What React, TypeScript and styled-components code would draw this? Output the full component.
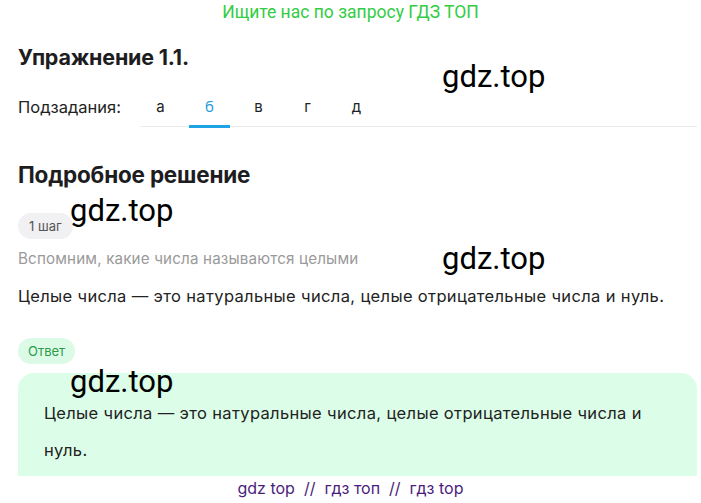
import styled, { createGlobalStyle } from 'styled-components';

const GlobalStyle = createGlobalStyle`
  html, body {
    margin: 0;
    padding: 0;
    background: #ffffff;
  }
  body {
    font-family: Inter, 'Noto Sans', sans-serif;
    color: #1d1d1f;
  }
`;

const Page = styled.div`
  position: relative;
  width: 701px;
  height: 503px;
  overflow: hidden;
  background: #fff;
`;

const Banner = styled.div`
  height: 23px;
  display: flex;
  align-items: center;
  justify-content: center;
  font-family: Roboto, 'Liberation Sans', sans-serif;
  font-size: 17.5px;
  color: #33cc44;
`;

const Content = styled.div`
  padding: 0 4px 0 18px;
  display: flex;
  flex-direction: column;
`;

const Title = styled.h1`
  margin: 21px 0 0;
  font-size: 21.5px;
  line-height: 26px;
  font-weight: 700;
  letter-spacing: -0.2px;
`;

const SubtaskRow = styled.div`
  margin-top: 22px;
  display: flex;
  align-items: stretch;
  height: 35px;
`;

const SubtaskLabel = styled.span`
  width: 122px;
  font-size: 16.5px;
  line-height: 30px;
  color: #222;
`;

const Tabs = styled.div`
  flex: 1;
  display: flex;
  gap: 8px;
  border-bottom: 1.5px solid #ebebeb;
`;

const Tab = styled.span<{ $active?: boolean }>`
  width: 41px;
  text-align: center;
  font-size: 15px;
  line-height: 30px;
  color: ${(p) => (p.$active ? '#2a9fd8' : '#222')};
  border-bottom: 3px solid ${(p) => (p.$active ? '#1fa3e6' : 'transparent')};
  margin-bottom: -2px;
`;

const SectionTitle = styled.h2`
  margin: 35px 0 0;
  font-size: 22.5px;
  line-height: 26px;
  font-weight: 700;
  letter-spacing: -0.2px;
`;

const Pill = styled.span<{ $tone: 'gray' | 'green' }>`
  align-self: flex-start;
  height: 26px;
  padding: 0 ${(p) => (p.$tone === 'green' ? '10px' : '11px')};
  border-radius: 13px;
  display: flex;
  align-items: center;
  font-size: 13px;
  background: ${(p) => (p.$tone === 'green' ? '#dcfbe6' : '#f1f1f3')};
  color: ${(p) => (p.$tone === 'green' ? '#2b9a4c' : '#555')};
`;

const StepPill = styled(Pill)`
  margin-top: 25px;
`;

const AnswerPill = styled(Pill)`
  margin-top: 31px;
`;

const Hint = styled.p`
  margin: 10px 0 0;
  font-size: 15.2px;
  letter-spacing: 0.15px;
  line-height: 20px;
  color: #9a9a9a;
`;

const Body = styled.p`
  margin: 16px 0 0;
  font-size: 16.5px;
  letter-spacing: 0.35px;
  line-height: 22px;
  color: #222;
`;

const AnswerBox = styled.div`
  margin-top: 9px;
  height: 140px;
  border-radius: 16px;
  background: #dcfde8;
  padding: 22px 40px 0 26px;
  font-size: 16.5px;
  letter-spacing: 0.35px;
  line-height: 37px;
  color: #222;
`;

const Footer = styled.div`
  position: absolute;
  left: 0;
  right: 0;
  bottom: 0;
  height: 27px;
  padding-bottom: 3px;
  box-sizing: border-box;
  background: #fff;
  display: flex;
  align-items: center;
  justify-content: center;
  font-size: 16px;
  color: #4a1d7c;
  white-space: pre;
`;

const Watermark = styled.span<{ $x: number; $y: number }>`
  position: absolute;
  left: ${(p) => p.$x}px;
  top: ${(p) => p.$y}px;
  font-family: Roboto, 'Liberation Sans', sans-serif;
  font-size: 31px;
  line-height: 1;
  color: #000;
  pointer-events: none;
`;

const subtasks = ['а', 'б', 'в', 'г', 'д'];

export default function App() {
  return (
    <Page>
      <GlobalStyle />
      <Banner>Ищите нас по запросу ГДЗ ТОП</Banner>
      <Content>
        <Title>Упражнение 1.1.</Title>
        <SubtaskRow>
          <SubtaskLabel>Подзадания:</SubtaskLabel>
          <Tabs>
            {subtasks.map((s) => (
              <Tab key={s} $active={s === 'б'}>
                {s}
              </Tab>
            ))}
          </Tabs>
        </SubtaskRow>
        <SectionTitle>Подробное решение</SectionTitle>
        <StepPill $tone="gray">1 шаг</StepPill>
        <Hint>Вспомним, какие числа называются целыми</Hint>
        <Body>Целые числа — это натуральные числа, целые отрицательные числа и нуль.</Body>
        <AnswerPill $tone="green">Ответ</AnswerPill>
        <AnswerBox>
          Целые числа — это натуральные числа, целые отрицательные числа и нуль.
        </AnswerBox>
      </Content>
      <Footer>gdz top  //  гдз топ  //  гдз top</Footer>
      <Watermark $x={442} $y={61}>gdz.top</Watermark>
      <Watermark $x={70} $y={195}>gdz.top</Watermark>
      <Watermark $x={442} $y={243}>gdz.top</Watermark>
      <Watermark $x={70} $y={366}>gdz.top</Watermark>
    </Page>
  );
}
